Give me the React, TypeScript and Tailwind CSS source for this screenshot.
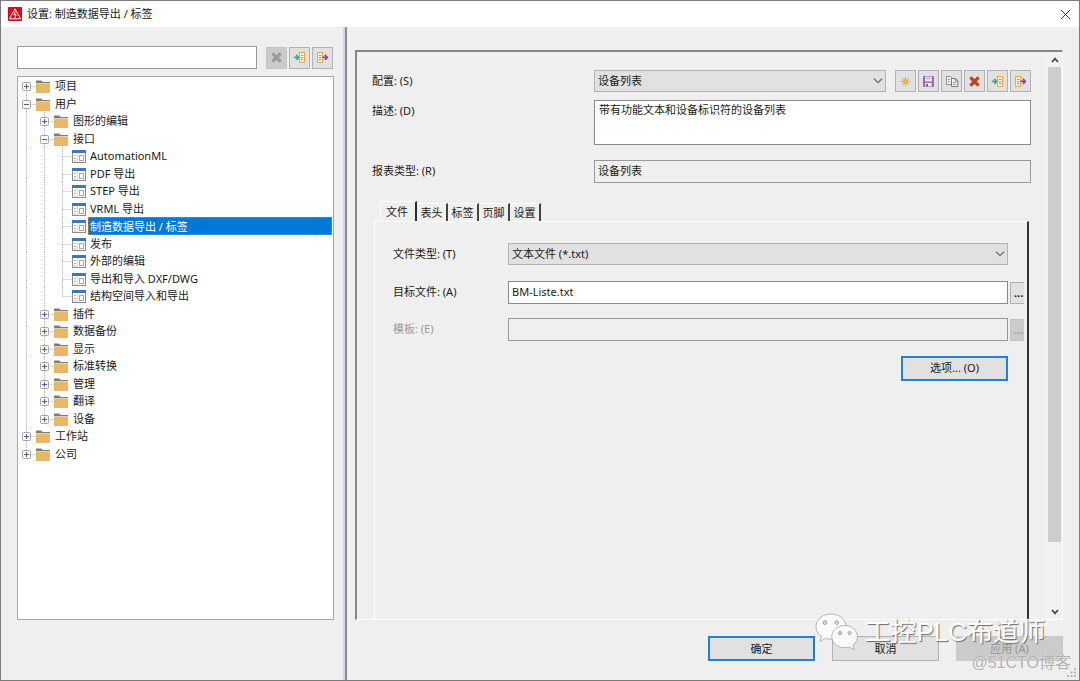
import React from "react";

type NodeKind = "folder" | "page";

interface TreeRow {
  label: string;
  depth: number;
  kind: NodeKind;
  open?: boolean;
  last?: boolean;
  selected?: boolean;
}

const rows: TreeRow[] = [
  { label: "项目", depth: 0, kind: "folder" },
  { label: "用户", depth: 0, kind: "folder", open: true },
  { label: "图形的编辑", depth: 1, kind: "folder" },
  { label: "接口", depth: 1, kind: "folder", open: true },
  { label: "AutomationML", depth: 2, kind: "page" },
  { label: "PDF 导出", depth: 2, kind: "page" },
  { label: "STEP 导出", depth: 2, kind: "page" },
  { label: "VRML 导出", depth: 2, kind: "page" },
  { label: "制造数据导出 / 标签", depth: 2, kind: "page", selected: true },
  { label: "发布", depth: 2, kind: "page" },
  { label: "外部的编辑", depth: 2, kind: "page" },
  { label: "导出和导入 DXF/DWG", depth: 2, kind: "page" },
  { label: "结构空间导入和导出", depth: 2, kind: "page", last: true },
  { label: "插件", depth: 1, kind: "folder" },
  { label: "数据备份", depth: 1, kind: "folder" },
  { label: "显示", depth: 1, kind: "folder" },
  { label: "标准转换", depth: 1, kind: "folder" },
  { label: "管理", depth: 1, kind: "folder" },
  { label: "翻译", depth: 1, kind: "folder" },
  { label: "设备", depth: 1, kind: "folder", last: true },
  { label: "工作站", depth: 0, kind: "folder" },
  { label: "公司", depth: 0, kind: "folder", last: true },
];

function Guide({ row, level, first }: { row: TreeRow; level: number; first: boolean }) {
  const own = level === row.depth;
  const top = own && first ? 9 : 0;
  const bottom = own && row.last ? 9 : 18;
  return (
    <svg width="18" height="18" className="shrink-0" aria-hidden="true">
      <path d={`M8.5 ${top}V${bottom}`} stroke="#b4b4b4" strokeDasharray="1 1" />
      {own && <path d="M8.5 9.5H18" stroke="#b4b4b4" strokeDasharray="1 1" />}
      {own && row.kind === "folder" && (
        <g>
          <rect x="4.5" y="5.5" width="8" height="8" rx="1" fill="#f6f6f6" stroke="#a6a6a6" />
          <path d="M6 9.5H11" stroke="#4a62ad" />
          {!row.open && <path d="M8.5 7V12" stroke="#4a62ad" />}
        </g>
      )}
    </svg>
  );
}

function FolderIcon() {
  return (
    <svg width="15" height="14" viewBox="0 0 15 14" className="mt-0.5 shrink-0" aria-hidden="true">
      <path d="M0 3V0.6H5L7 2H14V3Z" fill="#7d7d7d" />
      <rect x="0" y="3" width="14" height="1" fill="#d9d4cc" />
      <rect x="0" y="4" width="14" height="9" rx="0.5" fill="#eab766" />
    </svg>
  );
}

function PageIcon() {
  return (
    <svg width="15" height="14" viewBox="0 0 15 14" className="mt-0.5 shrink-0" aria-hidden="true">
      <rect x="0.5" y="0.5" width="13" height="12" fill="#fbfbfb" stroke="#8b8b8b" />
      <rect x="0" y="0" width="14" height="3" fill="#3f78b5" />
      <path d="M2 5.5H4M2 8.5H4M2 11H4" stroke="#b4b4b4" />
      <path d="M5.5 3V12" stroke="#dcdcdc" />
      <rect x="7.5" y="5.5" width="4" height="5" fill="#fff" stroke="#ababab" />
    </svg>
  );
}

function ImportIcon() {
  return (
    <svg width="13" height="13" viewBox="0 0 13 13" aria-hidden="true">
      <rect x="6.6" y="1.6" width="5" height="9.6" fill="#fff" stroke="#eda844" strokeWidth="1.2" />
      <path d="M8 4.5H10.3M8 6.5H10.3M8 8.5H10.3" stroke="#777" strokeWidth="0.8" />
      <path d="M0.8 6.4H5.4M3.4 3.9L5.8 6.4L3.4 8.9" fill="none" stroke="#45a883" strokeWidth="1.6" />
    </svg>
  );
}

function ExportIcon() {
  return (
    <svg width="13" height="13" viewBox="0 0 13 13" aria-hidden="true">
      <rect x="1.6" y="1.6" width="5" height="9.6" fill="#fff" stroke="#eda844" strokeWidth="1.2" />
      <path d="M3 4.5H5.3M3 6.5H5.3M3 8.5H5.3" stroke="#777" strokeWidth="0.8" />
      <path d="M6.4 6.4H11M9 3.9L11.4 6.4L9 8.9" fill="none" stroke="#8747a8" strokeWidth="1.6" />
    </svg>
  );
}

function CrossIcon({ color }: { color: string }) {
  return (
    <svg width="13" height="13" viewBox="0 0 13 13" aria-hidden="true">
      <path d="M2.4 2.4L10.6 10.6M10.6 2.4L2.4 10.6" stroke={color} strokeWidth="3.2" />
    </svg>
  );
}

function SunIcon() {
  return (
    <svg width="13" height="13" viewBox="0 0 13 13" aria-hidden="true">
      <path
        d="M6.5 1.5V11.5M1.5 6.5H11.5M3 3L10 10M10 3L3 10"
        stroke="#eba744"
        strokeWidth="1"
      />
      <circle cx="6.5" cy="6.5" r="2.5" fill="#eba744" />
      <circle cx="6.5" cy="6.5" r="0.8" fill="#f7d79f" />
    </svg>
  );
}

function SaveIcon() {
  return (
    <svg width="13" height="13" viewBox="0 0 13 13" aria-hidden="true">
      <path d="M1.6 1.6H11.4V11.4H1.6Z" fill="#a56cc0" stroke="#9a5bb8" />
      <rect x="3" y="1.6" width="7" height="4.8" fill="#ece4f0" />
      <path d="M3.8 3.6H9.2" stroke="#b78acb" strokeWidth="0.8" />
      <rect x="3.2" y="8" width="6.4" height="3.4" fill="#f6f0f8" />
      <rect x="4.2" y="9" width="1.8" height="2.4" fill="#8747a8" />
    </svg>
  );
}

function CopyIcon() {
  return (
    <svg width="14" height="13" viewBox="0 0 14 13" className="shrink-0" aria-hidden="true">
      <path d="M1.5 1.5H5L7.5 3.5V9.5H1.5Z" fill="#f4f4f4" stroke="#8d8d8d" />
      <path d="M3 4.5H5M3 6.8H5" stroke="#5b8fc6" strokeWidth="0.9" />
      <path d="M6.5 3.5H10.5L12.8 5.8V11.5H6.5Z" fill="#fff" stroke="#777" />
      <path d="M10.2 3.5V6H12.8" fill="none" stroke="#777" strokeWidth="0.9" />
      <path d="M8 7.5H11.3M8 9.6H11.3" stroke="#5b8fc6" strokeWidth="0.9" />
    </svg>
  );
}

function ToolButton({
  label,
  disabled,
  children,
}: {
  label: string;
  disabled?: boolean;
  children: React.ReactNode;
}) {
  return (
    <button
      type="button"
      aria-label={label}
      disabled={disabled}
      className="flex h-[22px] w-[21px] shrink-0 items-center justify-center border border-[#b2b2b2] bg-[#e1e1e1] disabled:border-[#c4c4c4] disabled:bg-[#cbcbcb]"
    >
      {children}
    </button>
  );
}

function SelectBox({ id, value }: { id: string; value: string }) {
  return (
    <div className="relative min-w-0 flex-1">
      <select
        id={id}
        defaultValue={value}
        className="block h-[22px] w-full appearance-none rounded-none border border-[#b4b4b4] bg-[#e1e1e1] px-[3px] outline-none"
      >
        <option>{value}</option>
      </select>
      <svg
        width="10"
        height="6"
        viewBox="0 0 10 6"
        className="pointer-events-none absolute top-2 right-[3px]"
        aria-hidden="true"
      >
        <path d="M1 0.8L5 4.6L9 0.8" fill="none" stroke="#6b6b6b" strokeWidth="1.2" />
      </svg>
    </div>
  );
}

function Sidebar() {
  return (
    <aside className="flex w-[342px] shrink-0 flex-col pt-[19px] pr-[9px] pb-[60px] pl-4">
      <div className="flex items-center gap-0.5 pr-px">
        <input
          aria-label="搜索"
          className="mr-[7px] h-[23px] min-w-0 flex-1 border border-[#9a9a9a] bg-white px-1 outline-none"
        />
        <ToolButton label="清除" disabled>
          <CrossIcon color="#9a9a9a" />
        </ToolButton>
        <ToolButton label="导入">
          <ImportIcon />
        </ToolButton>
        <ToolButton label="导出">
          <ExportIcon />
        </ToolButton>
      </div>
      <ul role="tree" className="mt-[7px] flex-1 border border-[#a5a8b0] bg-white">
        {rows.map((row, index) => (
          <li
            key={row.label}
            role="treeitem"
            aria-level={row.depth + 1}
            aria-selected={row.selected ?? false}
            className="flex items-center overflow-hidden odd:h-[18px] even:h-[17px]"
          >
            {Array.from({ length: row.depth + 1 }, (_, level) => (
              <Guide key={level} row={row} level={level} first={index === 0} />
            ))}
            {row.kind === "folder" ? <FolderIcon /> : <PageIcon />}
            {row.selected ? (
              <span className="mr-px ml-px flex h-full flex-1 items-center border border-dotted border-[#b98552] bg-[#0078d7] pl-px leading-none text-white">
                {row.label}
              </span>
            ) : (
              <span className={row.kind === "folder" ? "pb-px pl-1 leading-none" : "pb-px pl-[3px] leading-none"}>
                {row.label}
              </span>
            )}
          </li>
        ))}
      </ul>
    </aside>
  );
}

function Tabs() {
  return (
    <div role="tablist" className="flex items-end pl-1.5">
      <button
        type="button"
        role="tab"
        aria-selected="true"
        className="h-5 w-[37px] rounded-tl-xs border-t border-r-2 border-l border-t-white border-r-[#2b2b2b] border-l-white pr-0.5"
      >
        文件
      </button>
      {["表头", "标签", "页脚", "设置"].map((tab) => (
        <button
          key={tab}
          type="button"
          role="tab"
          aria-selected="false"
          className="h-[18px] w-[31px] border-t border-r-2 border-t-white border-r-[#444444]"
        >
          {tab}
        </button>
      ))}
    </div>
  );
}

function FilePanel() {
  return (
    <div
      role="tabpanel"
      className="flex flex-1 flex-col border-t border-r-2 border-l border-t-white border-r-[#333333] border-l-white pt-[21px] pr-[3px] pl-[18px]"
    >
      <div className="flex items-center pr-4">
        <label htmlFor="file-type" className="w-[115px] shrink-0">
          文件类型: (T)
        </label>
        <SelectBox id="file-type" value="文本文件 (*.txt)" />
      </div>
      <div className="mt-4 flex items-center">
        <label htmlFor="target-file" className="w-[115px] shrink-0 pb-px">
          目标文件: (A)
        </label>
        <input
          id="target-file"
          defaultValue="BM-Liste.txt"
          className="h-[23px] min-w-0 flex-1 border border-[#8a8a8a] bg-white px-[3px] pb-0.5 outline-none"
        />
        <button
          type="button"
          aria-label="浏览目标文件"
          className="ml-0.5 h-[22px] w-[14px] overflow-hidden border border-r-0 border-[#b2b2b2] bg-[#e1e1e1] pl-[3px] text-left font-bold"
        >
          ...
        </button>
      </div>
      <div className="mt-[14px] flex items-center text-[#9b9b9b]">
        <label htmlFor="template-file" className="w-[115px] shrink-0 pb-px">
          模板: (E)
        </label>
        <input
          id="template-file"
          disabled
          className="h-[23px] min-w-0 flex-1 border border-[#9a9a9a] bg-[#efefef] px-[3px] outline-none"
        />
        <button
          type="button"
          disabled
          aria-label="浏览模板"
          className="ml-0.5 h-[22px] w-[14px] overflow-hidden border border-r-0 border-[#c4c4c4] bg-[#cbcbcb] pl-[3px] text-left font-bold"
        >
          ...
        </button>
      </div>
      <div className="mt-[15px] flex justify-end pr-4">
        <button type="button" className="h-[25px] w-[107px] border-2 border-[#1e82d8] bg-[#e1e1e1] pb-px">
          选项... (O)
        </button>
      </div>
    </div>
  );
}

function ScrollBar() {
  return (
    <div className="flex w-[15px] shrink-0 flex-col bg-[#f1f1f1]" aria-hidden="true">
      <div className="flex h-[15px] items-center justify-center">
        <svg width="8" height="6" viewBox="0 0 8 6">
          <path d="M1 5L4 1.6L7 5" fill="none" stroke="#4a4a4a" strokeWidth="1.7" />
        </svg>
      </div>
      <div className="mr-px ml-px grow-[474] bg-[#cdcdcd]" />
      <div className="grow-[62]" />
      <div className="flex h-[15px] items-center justify-center">
        <svg width="8" height="6" viewBox="0 0 8 6">
          <path d="M1 1L4 4.4L7 1" fill="none" stroke="#4a4a4a" strokeWidth="1.7" />
        </svg>
      </div>
    </div>
  );
}

function Settings() {
  return (
    <section className="flex flex-1 border-t-2 border-r border-b border-l-2 border-t-[#868686] border-r-white border-b-white border-l-[#868686]">
      <div className="flex min-w-0 flex-1 flex-col pt-[18px] pr-4 pl-[15px]">
        <div className="flex items-center">
          <label htmlFor="scheme" className="w-[222px] shrink-0">
            配置: (S)
          </label>
          <SelectBox id="scheme" value="设备列表" />
          <div className="ml-[9px] flex gap-0.5">
            <ToolButton label="新建">
              <SunIcon />
            </ToolButton>
            <ToolButton label="保存">
              <SaveIcon />
            </ToolButton>
            <ToolButton label="复制">
              <CopyIcon />
            </ToolButton>
            <ToolButton label="删除">
              <CrossIcon color="#cc3a1f" />
            </ToolButton>
            <ToolButton label="导入">
              <ImportIcon />
            </ToolButton>
            <ToolButton label="导出">
              <ExportIcon />
            </ToolButton>
          </div>
        </div>
        <div className="mt-2 flex items-start">
          <label htmlFor="description" className="w-[222px] shrink-0 pt-[3px]">
            描述: (D)
          </label>
          <textarea
            id="description"
            defaultValue="带有功能文本和设备标识符的设备列表"
            className="block h-[45px] min-w-0 flex-1 resize-none border border-[#8a8a8a] bg-white px-1 py-px outline-none"
          />
        </div>
        <div className="mt-[15px] flex items-center">
          <label htmlFor="report-type" className="w-[222px] shrink-0 pb-px">
            报表类型: (R)
          </label>
          <input
            id="report-type"
            readOnly
            defaultValue="设备列表"
            className="h-[23px] min-w-0 flex-1 border border-[#9a9a9a] bg-[#efefef] px-[3px] pb-[3px] outline-none"
          />
        </div>
        <div className="mt-[18px] -mr-[13px] ml-0.5 flex flex-1 flex-col pr-[15px]">
          <Tabs />
          <FilePanel />
        </div>
      </div>
      <ScrollBar />
    </section>
  );
}

function Watermark() {
  return (
    <div className="pointer-events-none absolute right-2 bottom-[5px] flex flex-col items-end font-['Liberation_Sans','Noto_Sans_CJK_SC',sans-serif] whitespace-nowrap">
      <div className="flex items-center gap-1.5 pr-[26px]">
        <svg width="43" height="38" viewBox="0 0 43 38" aria-hidden="true">
          <g fill="#fcfcfc" stroke="#a3a3a3" strokeWidth="0.8">
            <path d="M16 1C7.5 1 1 6.6 1 13.6C1 17.6 3 21 6.4 23.4L5 28.4L10.6 25.4C12.3 25.9 14 26.2 16 26.2C24.5 26.2 31 20.6 31 13.6C31 6.6 24.5 1 16 1Z" />
            <path d="M29.5 12.5C22.3 12.5 16.8 17.4 16.8 23.6C16.8 29.8 22.3 34.6 29.5 34.6C31.2 34.6 32.8 34.3 34.2 33.9L39 36.6L37.8 32.3C40.8 30.2 42.4 27.1 42.4 23.6C42.4 17.4 36.7 12.5 29.5 12.5Z" />
          </g>
          <g fill="#e4e4e4" stroke="#8d8d8d" strokeWidth="0.9">
            <circle cx="10" cy="9.6" r="1.8" />
            <circle cx="21.8" cy="9.6" r="1.8" />
            <circle cx="25" cy="20" r="1.5" />
            <circle cx="34.6" cy="20" r="1.5" />
          </g>
        </svg>
        <span className="text-[26px] leading-[38px] text-white [text-shadow:1px_1px_1px_#6b6b6b]">
          工控PLC布道师
        </span>
      </div>
      <span className="text-[16px] leading-6 text-[#b0b0b0] [text-shadow:0_0_1px_#ffffff]">
        @51CTO博客
      </span>
    </div>
  );
}

export default function App() {
  return (
    <div className="relative flex min-h-screen flex-col border border-[#7b7b7b] bg-[#efefef] font-['Noto_Sans','Noto_Sans_CJK_SC',sans-serif] text-[11px] leading-4 text-[#1a1a1a]">
      <header className="flex h-[26px] items-center bg-white pr-2 pl-[7px]">
        <svg width="14" height="14" viewBox="0 0 14 14" aria-hidden="true">
          <rect width="14" height="14" rx="1" fill="#e2001f" />
          <path d="M7 1.8L12.6 11.8H1.4Z" fill="none" stroke="#fff" strokeWidth="1" />
          <path d="M7.6 4.4L5.8 7.8H8.2L6.8 11.4" fill="none" stroke="#fff" strokeWidth="1" />
        </svg>
        <h1 className="ml-[5px] flex-1">设置: 制造数据导出 / 标签</h1>
        <button type="button" aria-label="关闭">
          <svg width="11" height="11" viewBox="0 0 11 11" aria-hidden="true">
            <path d="M1 1L10 10M10 1L1 10" stroke="#333" strokeWidth="1" />
          </svg>
        </button>
      </header>
      <div className="flex flex-1">
        <Sidebar />
        <div className="w-1 shrink-0 border-r-2 border-r-[#8a8a90] bg-[#cfd7ee]" />
        <main className="flex min-w-0 flex-1 flex-col pt-[23px] pr-4 pb-[19px] pl-2">
          <Settings />
          <div className="mt-4 flex justify-end gap-[17px]">
            <button type="button" className="h-[25px] w-[107px] border-2 border-[#1e82d8] bg-[#e1e1e1]">
              确定
            </button>
            <button type="button" className="h-[25px] w-[107px] border border-[#b2b2b2] bg-[#e1e1e1]">
              取消
            </button>
            <button type="button" disabled className="h-[25px] w-[107px] bg-[#cbcbcb] text-[#969696]">
              应用 (A)
            </button>
          </div>
        </main>
      </div>
      <Watermark />
      <svg
        width="10"
        height="10"
        viewBox="0 0 10 10"
        fill="#b5b5b5"
        className="pointer-events-none absolute right-0.5 bottom-0.5"
        aria-hidden="true"
      >
        <path d="M7 0h2v2h-2zM7 3.5h2v2h-2zM7 7h2v2h-2zM3.5 3.5h2v2h-2zM3.5 7h2v2h-2zM0 7h2v2h-2z" />
      </svg>
    </div>
  );
}
